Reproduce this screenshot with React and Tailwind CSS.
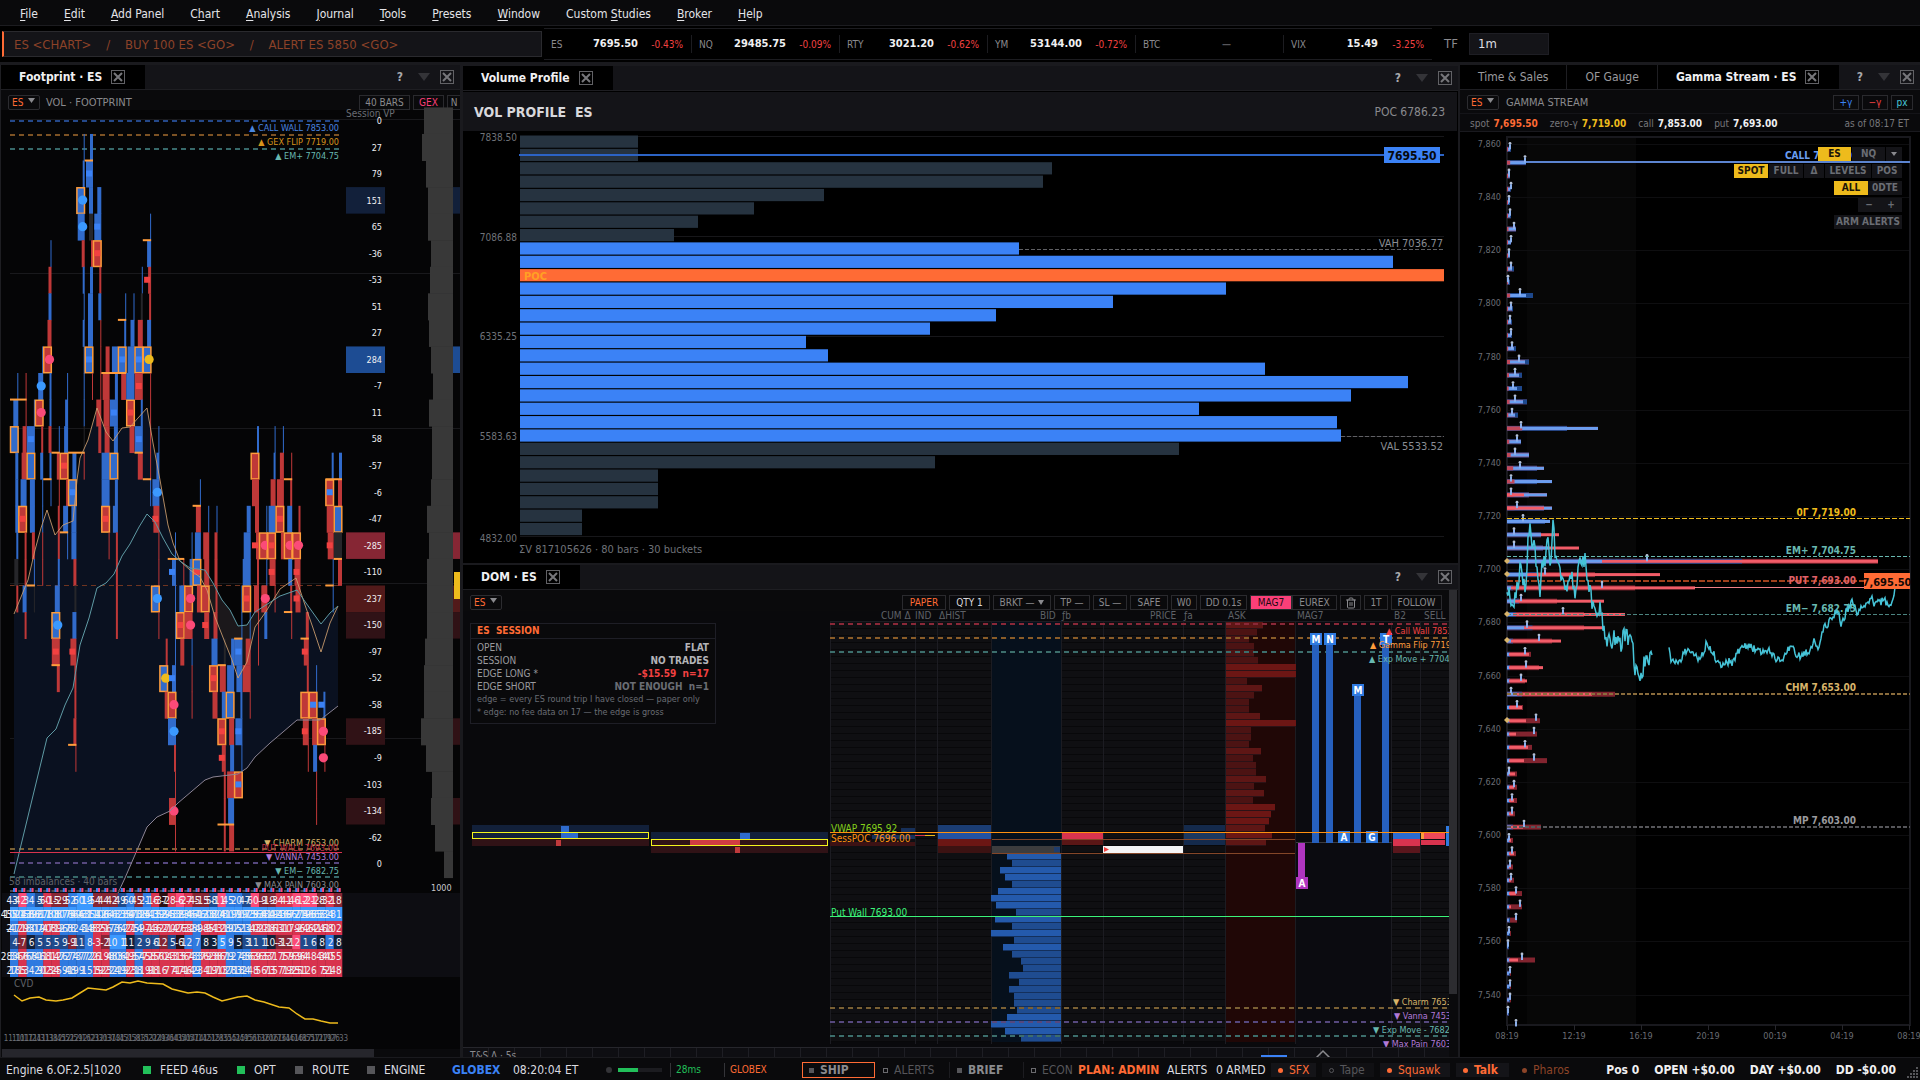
import { Trash2 } from "lucide-react";

const menu = [
  ["", "F", "ile"],
  ["", "E", "dit"],
  ["", "A", "dd Panel"],
  ["C", "h", "art"],
  ["", "A", "nalysis"],
  ["", "J", "ournal"],
  ["", "T", "ools"],
  ["", "P", "resets"],
  ["", "W", "indow"],
  ["Custom ", "S", "tudies"],
  ["", "B", "roker"],
  ["", "H", "elp"],
];

const tickers = [
  ["ES", "7695.50", "-0.43%"],
  ["NQ", "29485.75", "-0.09%"],
  ["RTY", "3021.20", "-0.62%"],
  ["YM", "53144.00", "-0.72%"],
  ["BTC", "—", ""],
  ["VIX", "15.49", "-3.25%"],
];

// repeatable pseudo random value in 0..1
function noise(n) {
  const v = Math.sin(n * 127.1 + 11.7) * 43758.5453;
  return v - Math.floor(v);
}

function toPath(points) {
  return points.map((p) => p.join(",")).join(" ");
}

function CloseButton() {
  return (
    <button aria-label="Close" className="block h-[14px] w-[14px] shrink-0">
      <svg width="14" height="14" viewBox="0 0 14 14" fill="none">
        <rect x="0.5" y="0.5" width="13" height="13" stroke="#626266" />
        <path d="M3 3L11 11M11 3L3 11" stroke="#77777b" strokeWidth="2" />
      </svg>
    </button>
  );
}

function HeaderTools() {
  return (
    <div className="ml-auto flex items-center pr-[6px]">
      <button className="w-3 text-xs font-bold text-[#a8a8ac]">?</button>
      <button aria-label="Panel menu" className="mr-[10px] ml-3 h-3 w-3">
        <svg width="12" height="12" viewBox="0 0 12 12">
          <path d="M0 2H12L6 10Z" fill="#343438" />
        </svg>
      </button>
      <CloseButton />
    </div>
  );
}

function PanelHeader({ tabs, title }) {
  return (
    <div className="flex h-[25px] shrink-0 border-b border-[#1e1e22] bg-[#141418]">
      {tabs?.map((t) => (
        <button key={t} className="border-r border-[#1e1e22] bg-black px-[18px] text-xs text-[#9a9a9e]">
          {t}
        </button>
      ))}
      <div className="flex items-center gap-[9px] bg-black pr-5 pl-[18px]">
        <h2 className="text-xs font-bold whitespace-pre text-[#f0f0f2]">{title}</h2>
        <CloseButton />
      </div>
      <HeaderTools />
    </div>
  );
}

function SymbolChip({ name }) {
  return (
    <label className="relative block h-[15px] w-8 shrink-0 rounded-xs border border-[#2c2c30]">
      <select
        aria-label={name}
        className="block h-[13px] w-full appearance-none bg-transparent pl-[3px] text-[10px] leading-[13px] text-[#ff6b35]"
      >
        <option>ES</option>
      </select>
      <svg width="7" height="5" viewBox="0 0 7 5" className="pointer-events-none absolute top-[2px] right-1">
        <path d="M0 0H7L3.5 5Z" fill="#8a8a8e" />
      </svg>
    </label>
  );
}

function ToolButton({ className, children }) {
  return (
    <button
      className={
        "flex h-[15px] shrink-0 items-center justify-center border border-[#2a2a2e] text-[10px] leading-[13px] whitespace-nowrap " +
        className
      }
    >
      {children}
    </button>
  );
}

/* ---------- footprint ---------- */

const ROW = 26.56;
const rowTop = (r) => 107.4 + r * ROW;
const colLeft = (c) => 10 + c * 8.3;

// start row, then one cell per row: colour + width (+ marker). Capitals are outlined.
const bars = [
  "10 b1 b5 B9 b3 b3 b3 b2 g4 r2",
  "10 r1 r1 r4 r5 b6 R9s r2 r2 b4 r2",
  "11 b1 b8q B9 b5 b5 r3 b1 g1",
  "9 b1 b5o R9p r2 b3 b1 b1 r1 r1",
  "5 b1 r3 b3 r4 R9p b2 b2 r3 b2 b1",
  "12 b1 r3 r1 r2 r2 b2 b5 B9o r8s r3",
  "10 b1 b3 b4 R9s r2 b5 b1",
  "13 b4 B9q b5 b5 r3 g2 b4 r6s r2 r2 r3 r1",
  "1 b1 b2 B9o b7o r3 b2 b1 b2 b1 b1 b1 g1 r1",
  "1 b3 b7q b4 g4 r2 b3 b5 b5 B9q r1",
  "3 b4 b7q R9s r2 b3 r1 r1 r1 r5 r3",
  "9 r4 r7 r6 r5 b8 b8 R9s r1",
  "9 b6 b3 b8q b4 B9 b3 b5 r2 r2 r2 r2",
  "7 b1 b2 B9q r5",
  "7 b1 b4 b7 b9 R9s r5",
  "6 b1 g2 r5 B9q r8s b2 b8q r5",
  "4 b1 b4 r3s r2 b4 B9y r1 r1 r1 r1 b1",
  "12 b1 b3 b7o r6s r1 r1 B9o r1",
  "20 r2 B9y r3",
  "16 b1 b4q b1 b1 b1 b4q R9p b8o r2 r1 r7p r1",
  "17 r1 b5 R9s r4",
  "16 b1 b3 R9p r8p b1 r1 r1",
  "14 b1 r5 b6 B9s r4",
  "15 b1 r6 r5 R9 r5s",
  "15 b1 r3 r3 r2 r4 b6 R9s r5",
  "20 g2 r6 b4 R9s r4s r2 r2 r2",
  "20 b3 b7 B9 r5 b4 r7 b6 r5",
  "18 b1 b1 b9q b6 b2 b7q b1 R9q",
  "15 b4 b7 b8 R9s b1 r5 r8 r1",
  "12 b2 R9 r7 r4 r3s r2 r5 r1 r1",
  "15 b1 R9p b1 r6p b3",
  "12 b1 b2 r5 b7 R9s r6s r1",
  "12 b1 r4 r7 R9s r3",
  "13 r1 r2 b5 R9p b4 r2 r1",
  "15 r2 R9p r6s r5s",
  "19 r3 r5s r2 R9 r6s r1",
  "21 b1 R9q r5 b4 r1 r1",
  "22 b2q R9p r1p",
  "13 b2 R9q r7 r6s b1 b1",
  "13 b3 r4 B9 g8 r4",
];

// column, number of columns, row whose top edge is marked
const caps = [
  [0, 2, 11], [5, 1, 13], [7, 2, 13], [2, 1, 18], [4, 1, 14], [6, 1, 16], [7, 1, 24], [5, 1, 21],
  [9, 1, 2], [13, 1, 8], [16, 1, 5], [11, 3, 10], [15, 1, 13], [16, 1, 14], [19, 2, 17], [22, 1, 15],
  [25, 1, 21], [25, 2, 27], [27, 1, 20], [33, 1, 14], [33, 1, 19], [35, 1, 20], [38, 2, 14], [39, 1, 17], [38, 1, 18],
];

const cellFill = { b: "#316bcb", r: "#bf3838", g: "#26262a" };
const markerFill = { o: "#3b99ff", p: "#fb4a78", y: "#eebb1c", s: "#f24141", q: "#3b82f6" };

const fast = [
  [14, 614], [21, 597], [28, 580], [35, 550], [41, 528], [47, 510], [55, 535], [63, 525], [73, 521], [77, 480], [80, 458],
  [88, 440], [97, 408], [106, 432], [113, 441], [122, 428], [130, 427], [138, 418], [147, 408], [153, 443], [160, 480],
  [168, 525], [173, 543], [180, 561], [190, 570], [200, 577], [207, 590], [215, 617], [224, 640], [232, 660], [238, 678],
  [247, 662], [255, 627], [265, 613], [280, 589], [296, 578], [305, 605], [313, 628], [321, 652], [330, 623], [338, 606],
];
const slow = [
  [14, 874], [47, 738], [56, 729], [65, 705], [73, 688], [80, 645], [89, 618], [97, 588], [106, 583], [114, 574], [122, 556],
  [130, 544], [139, 527], [147, 514], [155, 522], [163, 538], [172, 554], [180, 561], [190, 568], [205, 570], [213, 583],
  [222, 600], [230, 610], [238, 626], [247, 625], [255, 612], [280, 596], [297, 590], [306, 603], [321, 624], [330, 613], [338, 606],
];
const anchor = [
  [118, 893], [125, 878], [147, 827], [157, 817], [170, 811], [178, 803], [205, 780], [213, 777], [238, 774], [247, 768],
  [255, 757], [270, 743], [283, 732], [297, 720], [320, 720], [338, 706],
];
const cvd = [
  [14, 995], [22, 1001], [30, 998], [39, 997], [46, 1000], [56, 1001], [63, 1000], [72, 998], [80, 993], [88, 988], [97, 989],
  [106, 990], [113, 987], [122, 982], [130, 983], [138, 981], [147, 983], [163, 984], [172, 989], [180, 991], [188, 993],
  [197, 992], [205, 993], [213, 997], [222, 1001], [238, 997], [247, 996], [255, 1000], [264, 1002], [279, 1007], [289, 1008],
  [297, 1014], [305, 1019], [313, 1019], [321, 1021], [330, 1023], [338, 1023],
];

const deltas = [
  0, 27, 79, 151, 65, -36, -53, 51, 27, 284, -7, 11, 58, -57, -6, -47, -285, -110, -237, -150, -97, -52, -58, -185, -9, -103,
  -134, -62, 0,
];
const deltaFill = {
  151: "#12203a", 284: "#1d4c93", "-285": "#862634", "-237": "#521a1a", "-150": "#301216", "-185": "#301216", "-134": "#301216",
};
const sessionVp = [
  424, 422, 426, 428, 428, 431, 430, 428, 429, 431, 433, 429, 432, 432, 431, 427, 429, 427, 427, 427, 425, 424, 424, 421, 426,
  432, 431, 435, 444,
];

const levels = [
  [121, "#24488a", "▲ CALL WALL 7853.00", "#4a86e0", 131],
  [135, "#7c5224", "▲ GEX FLIP 7719.00", "#d8941c", 145],
  [149, "#37696a", "▲ EM+ 7704.75", "#68b8b0", 159],
  [849, "#7a6034", "▼ CHARM 7653.00", "#d8b46a", 846],
  [863, "#56487e", "▼ VANNA 7453.00", "#b27ad8", 860],
  [877, "#37696a", "▼ EM− 7682.75", "#68b8b0", 874],
  [0, "", "▼ MAX PAIN 7603.00", "#8a8a8e", 888],
];

const statColors = {
  B: "#2f7ae0", L: "#3b99ff", D: "#1f4a8c", R: "#d8334e", P: "#fb4a78", M: "#862634", N: "#12203a", K: "#2c1013",
};
const trend = "BRBBRRBBBBRRBBRBRRRRRRBRRRBBBRRRRRRRRRRR";
const statRows = [
  ["DPBDRMMBLLMMMDBMBRKRPRMMDPBBDPMMRRPPPMRM", 60, true],
  ["LLLLLLLLLLLLLLLLLLLLLLLLLLLLLLLLLLLLLLLL", 9000, false],
  [trend, 900, true],
  ["DMNDDDDMDBRMLLNDDDMDKBBNNLBNDDDNMMPDDNBN", 12, true],
  [trend, 900, false],
  [trend, 300, false],
];

function FootprintBar({ spec, col }) {
  const [start, ...cells] = spec.split(" ");
  const right = colLeft(col + 1);
  return cells.map((cell, i) => {
    const [kind, width, mark] = cell;
    const w = Number(width);
    const y = rowTop(Number(start) + i);
    const boxed = kind !== kind.toLowerCase();
    const left = right - Math.min(w, 8.3);
    const mid = right - 4;
    return (
      <g key={i}>
        <rect
          x={boxed ? left + 0.5 : left}
          y={boxed ? y + 0.7 : y}
          width={boxed ? 7.6 : Math.min(w, 8.3)}
          height={boxed ? ROW - 1 : ROW + 0.4}
          fill={cellFill[kind.toLowerCase()]}
          stroke={boxed ? "#ff9d3c" : "none"}
          strokeWidth="1.5"
        />
        {mark && "opy".includes(mark) && <circle cx={right - 2} cy={y + 13} r="4.6" fill={markerFill[mark]} />}
        {mark && "sq".includes(mark) && <rect x={mid - 3} y={y + 10} width="6" height="6" fill={markerFill[mark]} />}
      </g>
    );
  });
}

function FootprintChart() {
  return (
    <svg className="min-h-0 w-full flex-1 overflow-visible text-[9px]" role="img" aria-label="Footprint chart">
      <g transform="translate(-1 -110)">
        {[119, 273, 428, 583, 738].map((y) => (
          <rect key={y} x="10" y={y} width="450" height="1" fill="#19191c" />
        ))}
        <polygon
          points={toPath([...fast.slice(0, 23), ...slow.slice(17), ...anchor.slice().reverse(), [14, 893]])}
          fill="#0a1120"
        />
        <polygon points={toPath([...fast.slice(24, 35), ...slow.slice(19, 27).reverse()])} fill="#1b181b" />
        <path d="M10 585.5H342" stroke="#6e3420" strokeDasharray="5 4" />
        {levels.slice(0, 6).map(([y, c]) => (
          <path key={y} d={`M10 ${y}H339`} stroke={c} strokeWidth="2" strokeDasharray="5 4" />
        ))}
        {bars.map((spec, i) => (
          <FootprintBar key={i} spec={spec} col={i} />
        ))}
        {caps.map(([c, n, r]) => (
          <rect key={`${c}-${r}`} x={colLeft(c)} y={rowTop(r) - 1} width={n * 8.3} height="2" fill="#ff9d3c" />
        ))}
        <g fill="none" strokeWidth="1">
          <polyline points={toPath(fast)} stroke="#cfa070" opacity="0.85" />
          <polyline points={toPath(slow)} stroke="#5f9aa4" />
          <polyline points={toPath(anchor)} stroke="#8c8494" />
        </g>
        <path d="M10 852.5H342" stroke="#d8334e" />
        <g textAnchor="end">
          {levels.map(([, , label, c, y]) => (
            <text key={label} x="339" y={y} fill={c}>
              {label}
            </text>
          ))}
          <text x="338" y="851" fill="#c02c44">
            PUT WALL 7693.00
          </text>
        </g>
        <text x="9" y="885" fill="#5f6268" className="text-[10px]" xmlSpace="preserve">
          58 imbalances · 40 bars
        </text>

        <text x="346" y="117" fill="#6a6d74" className="text-[10px]">
          Session VP
        </text>
        {deltas.map((d, i) => (
          <g key={i}>
            {deltaFill[d] && (
              <>
                <rect x="346" y={rowTop(i)} width="39" height={ROW} fill={deltaFill[d]} />
                <rect x="453" y={rowTop(i)} width="8" height={ROW} fill={deltaFill[d]} />
              </>
            )}
            <text x="382" y={124 + i * 26.54} fill="#f0f0f2" textAnchor="end">
              {d}
            </text>
            <rect x={sessionVp[i]} y={rowTop(i)} width={453 - sessionVp[i]} height={i === 28 ? 27 : ROW + 0.5} fill="#383838" />
          </g>
        ))}
        <rect x="454" y="572" width="7" height="27" fill="#eebb1c" />
        <text x="431" y="891" fill="#c8c8cc">
          1000
        </text>

        <rect x="2" y="893" width="458" height="84" fill="#0d0d12" />
        {statRows.map(([colors, max, signed], r) => (
          <g key={r}>
            {colors.split("").map((c, i) => (
              <rect key={i} x={colLeft(i)} y={893 + r * 14} width="8.6" height="14" fill={statColors[c]} />
            ))}
            {colors.split("").map((c, i) => {
              const v = Math.floor(noise(r * 53 + i) * max) + 1;
              const negative = signed && "RPMK".includes(c);
              return (
                <text key={i} x={colLeft(i) + 8} y={904 + r * 14} fill="#f0f0f4" textAnchor="end" className="text-[10px]">
                  {negative ? -v : v}
                </text>
              );
            })}
          </g>
        ))}
        {bars.map((_, i) => (
          <g key={i}>
            <rect x={colLeft(i)} y="890" width="6" height="2" fill="#4a4a4e" />
            <rect x={colLeft(i) + 3} y="888" width="2" height="4" fill="#3b82f6" />
            <rect x={colLeft(i) + 5} y="888" width="2" height="4" fill="#fb4a78" />
          </g>
        ))}
        <text x="14" y="987" fill="#5f6268" className="text-[10px]">
          CVD
        </text>
        <polyline points={toPath(cvd)} fill="none" stroke="#eebb1c" strokeWidth="1.5" />
        <g fill="#6a6d74" textAnchor="middle" className="text-[8px]">
          {bars.map((_, i) => (
            <text key={i} x={colLeft(i) + 4} y="1041">
              {11 + Math.floor(i / 6)}:{10 + ((i * 7) % 50)}
            </text>
          ))}
        </g>
      </g>
    </svg>
  );
}

/* ---------- volume profile ---------- */

const buckets = [
  118, 118, 532, 523, 304, 234, 178, 154, 499, 873, 924, 706, 593, 476, 410, 286, 308, 745, 888, 831, 679, 817, 821, 659, 415,
  138, 138, 138, 62, 62,
];

function VolumeChart() {
  return (
    <svg className="min-h-0 w-full flex-1 text-[10px]" role="img" aria-label="Volume profile chart">
      <g transform="translate(-463 -131)">
        <g fill="#6f7278" textAnchor="end">
          <text x="517" y="141">7838.50</text>
          <text x="517" y="241">7086.88</text>
          <text x="517" y="340">6335.25</text>
          <text x="517" y="440">5583.63</text>
          <text x="517" y="542">4832.00</text>
        </g>
        {[136, 236, 336, 436, 536].map((y) => (
          <rect key={y} x="520" y={y} width="924" height="1" fill="#17171a" />
        ))}
        {buckets.map((w, i) => (
          <rect
            key={i}
            x="520"
            y={135.5 + i * 13.36}
            width={w}
            height="12.2"
            fill={i === 10 ? "#ff6b35" : i > 7 && i < 23 ? "#3b82f6" : "#263340"}
          />
        ))}
        <path d="M1019 249.5H1444M1341 436.5H1444" stroke="#606064" strokeDasharray="4 2" />
        <text x="524" y="280" fill="#ffa024" className="text-[11px] font-bold">
          POC
        </text>
        <g fill="#8a8d94" textAnchor="end" className="text-[11px]">
          <text x="1443" y="247">VAH 7036.77</text>
          <text x="1443" y="450">VAL 5533.52</text>
        </g>
        <rect x="519" y="154" width="925" height="2" fill="#2c63c4" />
        <rect x="1384" y="147" width="56" height="16" fill="#3b82f6" />
        <text x="1412" y="160" fill="#06080c" textAnchor="middle" className="text-xs font-bold">
          7695.50
        </text>
        <text x="519" y="553" fill="#6f7278" className="text-[11px]">
          ΣV 817105626 · 80 bars · 30 buckets
        </text>
      </g>
    </svg>
  );
}

/* ---------- dom ---------- */

const asks = [
  37, 31, 23, 28, 28, 32, 70, 70, 21, 36, 28, 23, 23, 34, 70, 25, 25, 23, 35, 27, 30, 30, 40, 28, 38, 27, 49, 45, 43, 39, 46, 40,
];
const bids = [54, 49, 61, 56, 49, 63, 70, 65, 45, 66, 49, 70, 47, 58, 49, 40, 38, 52, 42, 52, 47, 47, 44, 54, 70, 56, 40];

const domHeads = [
  [881, "CUM Δ"], [915, "IND"], [939, "ΔHIST"], [1040, "BID"], [1062, "ƒb"], [1150, "PRICE"], [1184, "ƒa"], [1228, "ASK"],
  [1297, "MAG7"], [1394, "B2"], [1424, "SELL"],
];

const domLevels = [
  [624, "#8a2838", "▲ Call Wall 7853.00", "#f24141", 1386, 634],
  [638, "#8a5c28", "▲ Gamma Flip 7719.00", "#ff9d3c", 1370, 648],
  [652, "#3c6e6c", "▲ Exp Move + 7704.75", "#68b8b0", 1369, 662],
  [1008, "#7a6034", "▼ Charm 7653.00", "#d8b46a", 1393, 1005],
  [1022, "#56487e", "▼ Vanna 7453.00", "#b27ad8", 1394, 1019],
  [1036, "#3c6e6c", "▼ Exp Move - 7682.75", "#68b8b0", 1373, 1033],
  [0, "", "▼ Max Pain 7603.00", "#b27ad8", 1383, 1047],
];

const mags = [
  [1310, 633, "M"], [1324, 633, "N"], [1338, 831, "A"], [1352, 684, "M"], [1366, 831, "G"], [1380, 633, "T"],
];

// x, y, width, height, fill
const domCells = [
  [472, 825, 177, 7, "#12203a"], [561, 826, 8, 6, "#2f6bcc"], [472, 832, 177, 7, "#12203a"], [561, 832, 17, 7, "#2f6bcc"],
  [472, 839, 177, 7, "#301216"], [556, 840, 5, 6, "#c03a3c"],
  [651, 832, 177, 7, "#12203a"], [740, 833, 10, 6, "#2f6bcc"], [651, 839, 177, 7, "#301216"], [690, 840, 50, 6, "#d03c42"],
  [651, 846, 177, 7, "#301216"], [735, 847, 5, 6, "#c03a3c"],
  [901, 828, 14, 4, "#17305a"], [872, 835, 43, 4, "#17305a"], [830, 842, 85, 4, "#3c1214"],
  [915, 835, 10, 1, "#d8334e"], [925, 835, 10, 1, "#eebb1c"],
  [938, 825, 53, 7, "#1b3d74"], [938, 832, 53, 7, "#2352a4"], [938, 839, 53, 7, "#6c1614"], [938, 846, 53, 7, "#3c1212"],
  [992, 846, 68, 7, "#3c3c3e"], [1054, 847, 6, 5, "#1f3c6c"],
  [1062, 833, 41, 6, "#d8334e"], [1062, 840, 41, 5, "#5a1616"],
  [1103, 846, 80, 7, "#f4f4f4"],
  [1184, 825, 41, 6, "#142a4c"], [1184, 832, 41, 7, "#1b3860"], [1184, 840, 41, 5, "#142a4c"],
  [1393, 833, 27, 6, "#2c6cd0"], [1393, 839, 27, 7, "#d8334e"], [1393, 846, 27, 7, "#5a161c"],
  [1421, 833, 24, 6, "#f04858"], [1421, 833, 3, 6, "#ff9d3c"], [1421, 840, 24, 5, "#d8334e"], [1446, 826, 3, 20, "#2f7ae0"],
];

function DomChart() {
  return (
    <svg className="h-full w-full text-[9px]" role="img" aria-label="Depth of market ladder">
      <defs>
        <pattern id="rungs" width="7" height="7" y="622" patternUnits="userSpaceOnUse">
          <rect width="7" height="7" fill="#0f0f12" />
          <rect width="7" height="1" y="6" fill="#08080a" />
        </pattern>
      </defs>
      <g transform="translate(-463 -611)">
        <g fill="#5f6268" className="text-[10px]">
          {domHeads.map(([x, label]) => (
            <text key={label} x={x} y="619">
              {label}
            </text>
          ))}
        </g>
        <rect x="830" y="622" width="619" height="420" fill="url(#rungs)" />
        <rect x="1296" y="622" width="96" height="424" fill="#0b0b10" />
        <rect x="992" y="622" width="69" height="420" fill="#06101c" />
        <rect x="1226" y="622" width="69" height="420" fill="#200706" />
        {[830, 915, 937, 991, 1061, 1103, 1183, 1225, 1295, 1391, 1420].map((x) => (
          <rect key={x} x={x} y="622" width="1" height="422" fill="#1c1c22" />
        ))}
        <rect x="830" y="621" width="619" height="1" fill="#1c1c22" />
        {asks.map((w, i) => (
          <g key={i}>
            <rect x="1226" y={622 + i * 7} width={w} height="6" fill={w > 42 ? "#6c1614" : w > 33 ? "#5e1615" : "#4c1313"} />
            <rect x="1226" y={628 + i * 7} width={w} height="1" fill="#2c1216" />
          </g>
        ))}
        {bids.map((w, i) => (
          <g key={i}>
            <rect x={1061 - w} y={853 + i * 7} width={w} height="6" fill={w > 52 ? "#245aac" : "#1f4c90"} />
            <rect x={1061 - w} y={859 + i * 7} width={w} height="1" fill="#14305c" />
          </g>
        ))}
        {domCells.map(([x, y, w, h, c]) => (
          <rect key={`${x}-${y}-${w}`} x={x} y={y} width={w} height={h} fill={c} />
        ))}
        <rect x="472.5" y="832.5" width="176" height="6" fill="none" stroke="#f4f41c" />
        <rect x="651.5" y="839.5" width="176" height="6" fill="none" stroke="#f4f41c" />
        <path d="M1104 847L1109 849.5L1104 852Z" fill="#f24141" />
        <path d="M992 839.5H1295M992 853.5H1295" stroke="#844628" />

        {domLevels.slice(0, 6).map(([y, line]) => (
          <path key={y} d={`M830 ${y}H1449`} stroke={line} strokeWidth="2" strokeDasharray="5 4" />
        ))}
        <rect x="1296" y="842" width="96" height="1" fill="#3c3c40" />
        {mags.map(([x, y, label]) => (
          <g key={x}>
            {y < 800 && <rect x={x + 2} y={y} width="7" height={843 - y} fill="#2660be" />}
            <rect x={x} y={y} width="12" height="12" fill="#2f7ae0" />
            <text x={x + 6} y={y + 10} fill="#fff" textAnchor="middle" className="text-[10px] font-bold">
              {label}
            </text>
          </g>
        ))}
        <rect x="1298" y="843" width="7" height="34" fill="#b035c0" />
        <rect x="1296" y="877" width="12" height="12" fill="#b035c0" />
        <text x="1302" y="887" fill="#fff" textAnchor="middle" className="text-[10px] font-bold">
          A
        </text>

        {domLevels.map(([, , label, c, x, ty]) => (
          <text key={label} x={x} y={ty} fill={c}>
            {label}
          </text>
        ))}
        <rect x="830" y="832" width="619" height="1" fill="#ff9010" />
        <rect x="830" y="916" width="619" height="1" fill="#3cf47a" />
        <g className="text-[10px]">
          <text x="831" y="832" fill="#84d01c">VWAP 7695.92</text>
          <text x="831" y="842" fill="#ff9010">SessPOC 7696.00</text>
          <text x="831" y="916" fill="#3cf47a">Put Wall 7693.00</text>
        </g>
      </g>
    </svg>
  );
}

const session = [
  ["OPEN", "FLAT", "text-[#b4b4b8]"],
  ["SESSION", "NO TRADES", "text-[#b4b4b8]"],
  ["EDGE LONG *", "-$15.59  n=17", "text-[#f24141]"],
  ["EDGE SHORT", "NOT ENOUGH  n=1", "text-[#6a6d74]"],
];

function SessionCard() {
  return (
    <section className="absolute top-3 left-[7px] w-[246px] border border-[#1e1e26] bg-[#09090b] pb-1 text-[10px] leading-[13px]">
      <h3 className="border-b border-[#1e1e26] px-[6px] pb-px font-bold whitespace-pre text-[#ff6b35]">{"ES  SESSION"}</h3>
      <dl className="px-[6px] pt-[2px]">
        {session.map(([name, value, color]) => (
          <div key={name} className="flex justify-between">
            <dt className="text-[#9a9a9e]">{name}</dt>
            <dd className={"font-bold whitespace-pre " + color}>{value}</dd>
          </div>
        ))}
      </dl>
      <p className="px-[6px] text-[9px] leading-[13px] whitespace-nowrap text-[#6a6d74]">
        edge = every ES round trip I have closed — paper only
      </p>
      <p className="px-[6px] text-[9px] leading-[13px] text-[#6a6d74]">* edge: no fee data on 17 — the edge is gross</p>
    </section>
  );
}

function DomToolbar() {
  return (
    <div className="flex h-[21px] shrink-0 items-start gap-[3px] bg-[#0a0a0c] px-[7px] pt-[5px] text-[#8a8a8e]">
      <SymbolChip name="DOM symbol" />
      <ToolButton className="ml-auto w-[44px] text-[#ff6b35]">PAPER</ToolButton>
      <ToolButton className="w-[41px] text-[#d8d8dc]">QTY 1</ToolButton>
      <ToolButton className="w-[58px] gap-1">
        BRKT —
        <svg width="6" height="5" viewBox="0 0 6 5">
          <path d="M0 0H6L3 5Z" fill="#8a8a8e" />
        </svg>
      </ToolButton>
      <ToolButton className="w-9">TP —</ToolButton>
      <ToolButton className="w-[34px]">SL —</ToolButton>
      <ToolButton className="w-[38px]">SAFE</ToolButton>
      <ToolButton className="w-[26px]">W0</ToolButton>
      <ToolButton className="w-[47px]">DD 0.1s</ToolButton>
      <div className="flex">
        <ToolButton className="w-[42px] bg-[#fb3f78] text-[#1c0810]">MAG7</ToolButton>
        <ToolButton className="w-[45px]">EUREX</ToolButton>
      </div>
      <ToolButton className="w-[21px]">
        <Trash2 size={12} aria-label="Flatten" />
      </ToolButton>
      <ToolButton className="w-6">1T</ToolButton>
      <ToolButton className="w-[51px]">FOLLOW</ToolButton>
    </div>
  );
}

/* ---------- gamma stream ---------- */

// outer length, inner length, marker offset; one strike every 5 points from 7858 down
const strikes = [
  [4, 3, 3], [19, 19, 18], [3, 3, 2], [4, 3, 4], [3, 2, 2], [4, 3, 3], [9, 9, 7], [4, 4, 4], [3, 3, 2], [7, 5, 4], [3, 2, 1],
  [26, 19, 13], [6, 5, 4], [5, 4, 3], [5, 4, 4], [9, 7, 5], [22, 18, 12], [15, 12, 8], [15, 10, 6], [20, 16, 8], [11, 8, 5],
  [60, 91, 14], [14, 14, 10], [22, 22, 8], [30, 37, 13], [30, 45, 4], [22, 40, 4], [37, 45, 10], [38, 43, 16], [34, 52, 7],
  [36, 72, 7], [371, 371, 140], [88, 153, 38], [128, 188, 95], [50, 97, 14], [77, 118, 56], [77, 96, 20], [45, 54, 32],
  [24, 22, 18], [32, 36, 19], [18, 20, 14], [108, 85, 4], [16, 15, 10], [33, 19, 29], [30, 9, 27], [25, 21, 18], [40, 17, 27],
  [10, 8, 2], [10, 7, 7], [10, 7, 5], [8, 6, 5], [34, 16, 17], [6, 4, 2], [9, 7, 5], [6, 4, 3], [7, 4, 4], [15, 9, 9],
  [15, 4, 13], [10, 2, 9], [4, 2, 2], [2, 1, 1], [28, 11, 15], [4, 2, 3], [4, 2, 3], [4, 2, 3], [2, 1, 1], [0, 0, 9],
];
// blue part of the mixed strikes
const blueSplit = { 28: 43, 29: 34, 30: 42, 31: 95, 32: 20, 33: 4, 34: 8, 35: 6, 36: 17, 37: 4, 41: 10, 51: 4 };
// red part laid over the blue strikes
const redOver = { 26: 17, 27: 37 };

const priceA = [
  [1507, 600], [1509, 594], [1512, 612], [1515, 600], [1518, 585], [1520, 568], [1522, 575], [1525, 584], [1527, 575],
  [1528, 532], [1530, 528], [1532, 550], [1534, 545], [1537, 570], [1540, 588], [1542, 555], [1545, 566], [1548, 540],
  [1551, 565], [1553, 515], [1555, 555], [1558, 560], [1562, 585], [1565, 590], [1568, 580], [1572, 578], [1575, 590],
  [1578, 575], [1580, 560], [1581, 557], [1585, 562], [1588, 580], [1592, 602], [1597, 618], [1600, 604], [1602, 620],
  [1605, 640], [1608, 636], [1612, 640], [1616, 636], [1620, 645], [1625, 635], [1630, 640], [1633, 650], [1635, 668],
  [1637, 660], [1640, 678], [1643, 668], [1646, 660], [1652, 655],
];
const priceB = [
  [1669, 650], [1671, 663], [1676, 660], [1680, 660], [1685, 650], [1692, 653], [1700, 660], [1706, 645], [1712, 652],
  [1717, 660], [1722, 668], [1726, 660], [1732, 664], [1737, 655], [1742, 645], [1750, 645], [1757, 652], [1763, 650],
  [1770, 650], [1775, 658], [1781, 662], [1787, 650], [1793, 650], [1801, 658], [1806, 652], [1812, 650], [1814, 637],
  [1818, 650], [1823, 630], [1830, 620], [1838, 612], [1841, 625], [1847, 610], [1852, 600], [1857, 612], [1863, 604],
  [1868, 605], [1871, 595], [1875, 605], [1885, 600], [1889, 606], [1893, 598], [1895, 587],
];

function jitter(points, amount) {
  const out = [];
  for (let i = 0; i < points.length - 1; i++) {
    const [x0, y0] = points[i];
    const [x1, y1] = points[i + 1];
    for (let x = x0; x < x1; x += 1) {
      const y = y0 + ((y1 - y0) * (x - x0)) / (x1 - x0);
      out.push([x, (y + (noise(x) - 0.5) * amount).toFixed(1)]);
    }
  }
  out.push(points[points.length - 1]);
  return toPath(out);
}

const gammaLevels = [
  [518.5, "#eebb1c", "0Γ 7,719.00", "5 2", "#eebb1c"],
  [556.5, "#68b8b0", "EM+ 7,704.75", "4 2", "#68b8b0"],
  [614.5, "#4c8480", "EM− 7,682.75", "4 2", "#68b8b0"],
  [694, "#8a6c3c", "CHM 7,653.00", "4 2", "#d8b46a"],
  [827, "#56565a", "MP 7,603.00", "4 2", "#9a9a9e"],
];

function GammaChart() {
  const yOf = (p) => 144 + (7860 - p) * 2.658;
  const ticks = Array.from({ length: 17 }, (_, i) => 7860 - i * 20);
  return (
    <svg className="h-full w-full text-[10px]" role="img" aria-label="Gamma stream chart">
      <g transform="translate(-1460 -132)">
        <rect x="1507" y="138" width="20" height="888" fill="#030303" />
        <rect x="1527" y="138" width="109" height="888" fill="#070707" />
        <g className="text-[9px]">
          {ticks.map((p) => (
            <g key={p}>
              <rect x="1508" y={Math.round(yOf(p))} width="402" height="1" fill="#0e0e10" />
              <text x="1501" y={yOf(p) + 3} fill="#6a6d74" textAnchor="end">
                {p.toLocaleString("en-US")}
              </text>
            </g>
          ))}
        </g>
        <path d="M1507 1026V137H1910V1025H1507" fill="none" stroke="#19191e" strokeWidth="2" />
        {["08:19", "12:19", "16:19", "20:19", "00:19", "04:19", "08:19"].map((t, i) => (
          <g key={i}>
            <rect x={1507 + i * 67} y="1025" width="1" height="5" fill="#26262c" />
            <text x={1507 + i * 67} y="1039" fill="#6a6d74" textAnchor="middle" className="text-[9px]">
              {t}
            </text>
          </g>
        ))}
        <rect x="1507" y="161" width="403" height="2" fill="#5c84d0" />
        {strikes.map(([outer, inner, mark], i) => {
          const y = yOf(7858 - i * 5);
          const blue = i < 28 ? inner : blueSplit[i] ?? 2;
          const outerBlue = i === 31 ? 235 : i < 30 ? outer : blue * 1.5;
          return (
            <g key={i}>
              <rect x="1507" y={y - 2.5} width={outer} height="5" fill="#82242f" />
              <rect x="1507" y={y - 2.5} width={Math.min(outer, outerBlue)} height="5" fill="#1d488c" />
              <rect x="1507" y={y - 1.5} width={inner} height="3" fill="#f25c68" />
              <rect x="1507" y={y - 1.5} width={Math.min(inner, blue)} height="3" fill="#6a9ef0" />
              {i < 28 && inner > 0 && <rect x="1507" y={y - 2} width={Math.max(1, inner / 6)} height="4" fill="#c0485a" />}
              {redOver[i] && <rect x="1507" y={y - 1.5} width={redOver[i]} height="3" fill="#f25c68" />}
              <circle cx={1507 + mark} cy={y - 6} r="1.4" fill="#b4c0d4" />
              <rect x={1506 + mark} y={y - 5} width="2" height="5" fill="#8cb0ec" />
            </g>
          );
        })}
        <path d="M1507 581H1910" stroke="#a0401c" strokeWidth="2" strokeDasharray="6 2" />
        <rect x="1694" y="587" width="216" height="1" fill="#f08088" />
        {gammaLevels.map(([y, c, label, dash, ink], i) => (
          <g key={label}>
            <path d={`M1507 ${y}H1910`} stroke={c} strokeWidth={i > 2 ? 2 : 1} strokeDasharray={dash} />
            <text x="1856" y={y - 3} fill={ink} textAnchor="end" className="font-bold">
              {label}
            </text>
          </g>
        ))}
        <text x="1856" y="584" fill="#e06068" textAnchor="end" className="font-bold">
          PUT 7,693.00
        </text>
        <text x="1785" y="159" fill="#6a9ef0" className="font-bold">
          CALL 7,853.00
        </text>
        {[561, 574, 614, 640, 720].map((y) => (
          <path key={y} d={`M1507 ${y - 3}L1510 ${y}L1507 ${y + 3}L1504 ${y}Z`} fill="#d8b46a" />
        ))}
        <g fill="none" stroke="#46c4d8" strokeWidth="1.5">
          <polyline points={jitter(priceA, 18)} />
          <polyline points={jitter(priceB, 8)} />
        </g>
        <rect x="1864" y="573" width="46" height="16" fill="#ff6b35" />
        <text x="1887" y="586" fill="#140804" textAnchor="middle" className="text-[11px] font-bold">
          7,695.50
        </text>
      </g>
    </svg>
  );
}

function OverlayButton({ on, className, children }) {
  return (
    <button
      className={
        "h-[14px] text-[10px] leading-[14px] font-bold " +
        (on ? "bg-[#eebb1c] text-[#1c1608] " : "bg-[#141418] text-[#6a6d74] ") +
        className
      }
    >
      {children}
    </button>
  );
}

function GammaOverlay() {
  return (
    <div className="absolute top-[15px] right-[18px] flex flex-col items-end gap-[3px]">
      <div className="flex gap-px">
        <OverlayButton on className="w-[33px]">ES</OverlayButton>
        <OverlayButton className="w-[33px]">NQ</OverlayButton>
        <OverlayButton className="flex w-4 items-center justify-center">
          <svg width="6" height="4" viewBox="0 0 6 4" aria-label="More symbols">
            <path d="M0 0H6L3 4Z" fill="#8a8a8e" />
          </svg>
        </OverlayButton>
      </div>
      <div className="flex gap-px">
        <OverlayButton on className="w-[34px]">SPOT</OverlayButton>
        <OverlayButton className="w-[34px]">FULL</OverlayButton>
        <OverlayButton className="w-5">Δ</OverlayButton>
        <OverlayButton className="w-[46px]">LEVELS</OverlayButton>
        <OverlayButton className="w-[30px]">POS</OverlayButton>
      </div>
      <div className="flex">
        <OverlayButton on className="w-[34px]">ALL</OverlayButton>
        <OverlayButton className="w-[34px]">0DTE</OverlayButton>
      </div>
      <div className="flex">
        <OverlayButton className="w-[22px]">−</OverlayButton>
        <OverlayButton className="w-[22px]">+</OverlayButton>
      </div>
      <OverlayButton className="w-[68px]">ARM ALERTS</OverlayButton>
    </div>
  );
}

const quotes = [
  ["spot", "7,695.50", "text-[#ff6b35]"],
  ["zero-γ", "7,719.00", "text-[#eebb1c]"],
  ["call", "7,853.00", "text-[#f0f0f2]"],
  ["put", "7,693.00", "text-[#f0f0f2]"],
];

/* ---------- status bar ---------- */

const feeds = [
  ["FEED 46us", "bg-[#22c05a]", "w-[94px]"],
  ["OPT", "bg-[#22c05a]", "w-[58px]"],
  ["ROUTE", "bg-[#56565a]", "w-[72px]"],
  ["ENGINE", "bg-[#56565a]", "w-[85px]"],
];

const sounds = [
  ["SFX", "w-[45px] bg-[#141418] text-[#ff6b35]", "bg-[#ff6b35]"],
  ["Tape", "w-[52px] bg-[#101013] text-[#56565a]", "border border-[#56565a]"],
  ["Squawk", "w-[70px] bg-[#141418] text-[#ff6b35]", "bg-[#ff6b35]"],
  ["Talk", "w-[53px] bg-[#141418] font-bold text-[#ff6b35]", "bg-[#ff6b35]"],
  ["Pharos", "w-[76px] text-[#8c4428]", "bg-[#8c4428]"],
];

function StatusBar() {
  return (
    <footer className="flex h-[22px] shrink-0 items-center overflow-hidden bg-[#0a0a0c] pt-[2px] text-xs whitespace-nowrap text-[#dcdce0]">
      <span className="w-[143px] pl-[6px]">Engine 6.OF.2.5|1020</span>
      {feeds.map(([name, color, width]) => (
        <span key={name} className={"flex items-center gap-[9px] " + width}>
          <i className={"h-2 w-2 " + color} />
          {name}
        </span>
      ))}
      <span className="w-[61px] font-bold text-[#3b82f6]">GLOBEX</span>
      <time className="w-[93px]">08:20:04 ET</time>
      <i className="h-[6px] w-[6px] rounded-full bg-[#343438]" />
      <span className="mx-[6px] h-1 w-11 bg-[#1c1c20]">
        <i className="block h-1 w-5 bg-[#22c05a]" />
      </span>
      <span className="ml-[2px] w-[54px] border-l border-[#343438] pl-[5px] text-[10px] text-[#22c05a]">28ms</span>
      <span className="w-[78px] border-l border-[#343438] pl-[5px] text-[10px] text-[#ff6b35]">GLOBEX</span>
      <button className="flex h-4 w-[73px] items-center gap-[6px] border border-[#ff6b35] pl-[6px] font-bold text-[#8a8a8e]">
        <i className="h-[5px] w-[5px] bg-[#56565a]" />
        SHIP
      </button>
      <button className="flex w-[74px] items-center gap-[6px] pl-2 text-[#56565a]">
        <i className="h-[5px] w-[5px] border border-[#6a6a6e]" />
        ALERTS
      </button>
      <button className="flex w-[74px] items-center gap-[6px] border-l border-[#1c1c20] pl-[7px] font-bold text-[#8a8a8e]">
        <i className="h-[5px] w-[5px] bg-[#56565a]" />
        BRIEF
      </button>
      <button className="flex w-[55px] items-center gap-[6px] border-l border-[#1c1c20] pl-[7px] text-[#56565a]">
        <i className="h-[5px] w-[5px] border border-[#6a6a6e]" />
        ECON
      </button>
      <span className="w-[89px] font-bold text-[#ff6b35]">PLAN: ADMIN</span>
      <span className="w-[49px]">ALERTS</span>
      <span className="w-[55px]">0 ARMED</span>
      <div className="flex gap-[6px]">
        {sounds.map(([name, color, dot]) => (
          <button key={name} className={"flex h-[14px] items-center gap-[6px] pl-[7px] leading-[14px] " + color}>
            <i className={"h-[5px] w-[5px] shrink-0 rounded-full " + dot} />
            {name}
          </button>
        ))}
      </div>
      <div className="ml-auto flex gap-[15px] pr-[10px] font-bold text-[#f0f0f2]">
        <span>Pos 0</span>
        <span>OPEN +$0.00</span>
        <span>DAY +$0.00</span>
        <span>DD -$0.00</span>
      </div>
      <svg width="14" height="14" viewBox="0 0 14 14" fill="#56565a" className="self-end">
        <path d="M10 1h2v2h-2zM7 4h2v2H7zM10 4h2v2h-2zM4 7h2v2H4zM7 7h2v2H7zM10 7h2v2h-2zM1 10h2v2H1zM4 10h2v2H4zM7 10h2v2H7zM10 10h2v2h-2z" />
      </svg>
    </footer>
  );
}

function App() {
  return (
    <div className="flex h-screen flex-col overflow-hidden bg-black font-['DejaVu_Sans_Condensed','Noto_Sans',sans-serif]">
      <nav className="flex h-[26px] shrink-0 items-center gap-[26px] border-b border-[#1c1c20] bg-[#0a0a0c] pt-[2px] pl-5 text-xs text-[#e4e4e8]">
        {menu.map(([a, key, b]) => (
          <button key={key + b} className="whitespace-pre">
            {a}
            <u className="underline-offset-2">{key}</u>
            {b}
          </button>
        ))}
      </nav>

      <div className="flex h-9 shrink-0 items-center">
        <input
          aria-label="Command line"
          placeholder="ES <CHART>    /    BUY 100 ES <GO>    /    ALERT ES 5850 <GO>"
          className="ml-[2px] h-[26px] w-[540px] border border-l-2 border-[#2a2a2e] border-l-[#ff6b35] bg-[#141418] pl-[10px] text-[13px] placeholder:text-[#8c4228]"
        />
        <div className="ml-[2px] flex h-8 items-center border-y border-[#1c1c20]">
          {tickers.map(([name, last, change]) => (
            <div
              key={name}
              className="flex h-[18px] w-[148px] items-center border-r border-[#1c1c20] pr-2 pl-[7px] text-[10px] last:border-0"
            >
              <span className="w-7 text-[#8a8a8e]">{name}</span>
              <b className={last === "—" ? "w-[60px] text-right text-[#56565a]" : "w-[59px] text-right text-[11px] text-[#f0f0f2]"}>
                {last}
              </b>
              <span className="ml-auto text-[#f24141]">{change}</span>
            </div>
          ))}
        </div>
        <label htmlFor="tf" className="ml-3 w-[25px] text-[13px] text-[#8a8a8e]">
          TF
        </label>
        <select
          id="tf"
          className="h-[22px] w-20 appearance-none border border-[#1e1e24] bg-[#141418] pl-2 text-[13px] text-[#dcdce0]"
        >
          <option>1m</option>
        </select>
      </div>

      <main className="grid min-h-0 flex-1 grid-cols-[460fr_996fr_460fr] gap-[2px] bg-[#1a1a1e] pb-px">
        <section className="mt-[3px] flex min-w-0 flex-col overflow-hidden border-l border-[#1e1e22] bg-[#050506]">
          <PanelHeader title="Footprint · ES" />
          <div className="flex h-5 shrink-0 items-start bg-[#0a0a0c] pt-[5px] pl-[7px] text-[11px] leading-[15px] text-[#8a8a8e]">
            <SymbolChip name="Footprint symbol" />
            <span className="ml-[6px]">VOL · FOOTPRINT</span>
            <div className="ml-auto flex w-[101px] gap-[3px] overflow-hidden">
              <ToolButton className="w-[51px]">40 BARS</ToolButton>
              <ToolButton className="w-[31px] text-[#fb3f78]">GEX</ToolButton>
              <ToolButton className="w-[14px]">N</ToolButton>
            </div>
          </div>
          <FootprintChart />
          <div className="h-2 shrink-0 bg-[#0a0a0c]">
            <div className="ml-px h-2 w-[372px] bg-[#26262c]" />
          </div>
        </section>

        <div className="flex min-w-0 flex-col">
          <section className="mt-1 ml-px flex h-[497px] shrink-0 flex-col overflow-hidden bg-black">
            <PanelHeader title="Volume Profile" />
            <div className="mt-px mr-px flex h-[39px] shrink-0 items-center justify-between bg-[#141418] pr-3 pl-[11px]">
              <h1 className="text-sm font-bold whitespace-pre text-[#d8d8dc]">{"VOL PROFILE  ES"}</h1>
              <span className="text-xs text-[#8a8a8e]">POC 6786.23</span>
            </div>
            <VolumeChart />
          </section>
          <section className="mt-[2px] ml-px flex min-h-0 flex-1 flex-col overflow-hidden bg-[#09090c]">
            <PanelHeader title="DOM · ES" />
            <div className="flex min-h-0 flex-1">
              <div className="flex min-w-0 flex-1 flex-col">
                <DomToolbar />
                <div className="relative min-h-0 flex-1 overflow-hidden">
                  <DomChart />
                  <SessionCard />
                </div>
                <div className="relative h-[10px] shrink-0 overflow-hidden border-t border-[#26262c] bg-[repeating-linear-gradient(90deg,#0e0e12_0_25px,#1e1e24_25px_26px)] pl-[7px] text-[10px] leading-[15px] text-[#8a8a8e]">
                  T&amp;S Δ · 5s
                  <svg width="70" height="10" className="absolute top-0 right-[118px]" fill="none">
                    <path d="M0 8H26" stroke="#3b82f6" strokeWidth="2" />
                    <path d="M55 10L62 3L69 10" stroke="#8a8a8e" strokeWidth="1.5" />
                  </svg>
                </div>
              </div>
              <div className="w-[9px] bg-[#0a0a0c]">
                <div className="h-[404px] w-2 bg-[#2c2c30]" />
              </div>
            </div>
          </section>
        </div>

        <section className="mt-[3px] flex min-w-0 flex-col overflow-hidden bg-black">
          <PanelHeader tabs={["Time & Sales", "OF Gauge"]} title="Gamma Stream · ES" />
          <div className="flex h-6 shrink-0 items-start gap-[3px] border-b border-[#141418] bg-[#0a0a0c] px-[7px] pt-[5px] text-[11px] leading-[15px] text-[#8a8a8e]">
            <SymbolChip name="Gamma symbol" />
            <span className="ml-1">GAMMA STREAM</span>
            <ToolButton className="ml-auto w-[26px] text-[#3b82f6]">+γ</ToolButton>
            <ToolButton className="w-[26px] text-[#f24141]">−γ</ToolButton>
            <ToolButton className="w-[22px] text-[#46c4d8]">px</ToolButton>
          </div>
          <div className="flex h-[18px] shrink-0 items-center gap-3 border-b border-[#19191e] bg-[#0a0a0c] pt-[2px] pr-[11px] pl-[10px] text-[10px] text-[#77777b]">
            {quotes.map(([name, value, color]) => (
              <span key={name} className="flex gap-1">
                {name}
                <b className={color}>{value}</b>
              </span>
            ))}
            <span className="ml-auto">as of 08:17 ET</span>
          </div>
          <div className="relative min-h-0 flex-1 overflow-hidden">
            <GammaChart />
            <GammaOverlay />
          </div>
        </section>
      </main>

      <StatusBar />
    </div>
  );
}

export default App;
